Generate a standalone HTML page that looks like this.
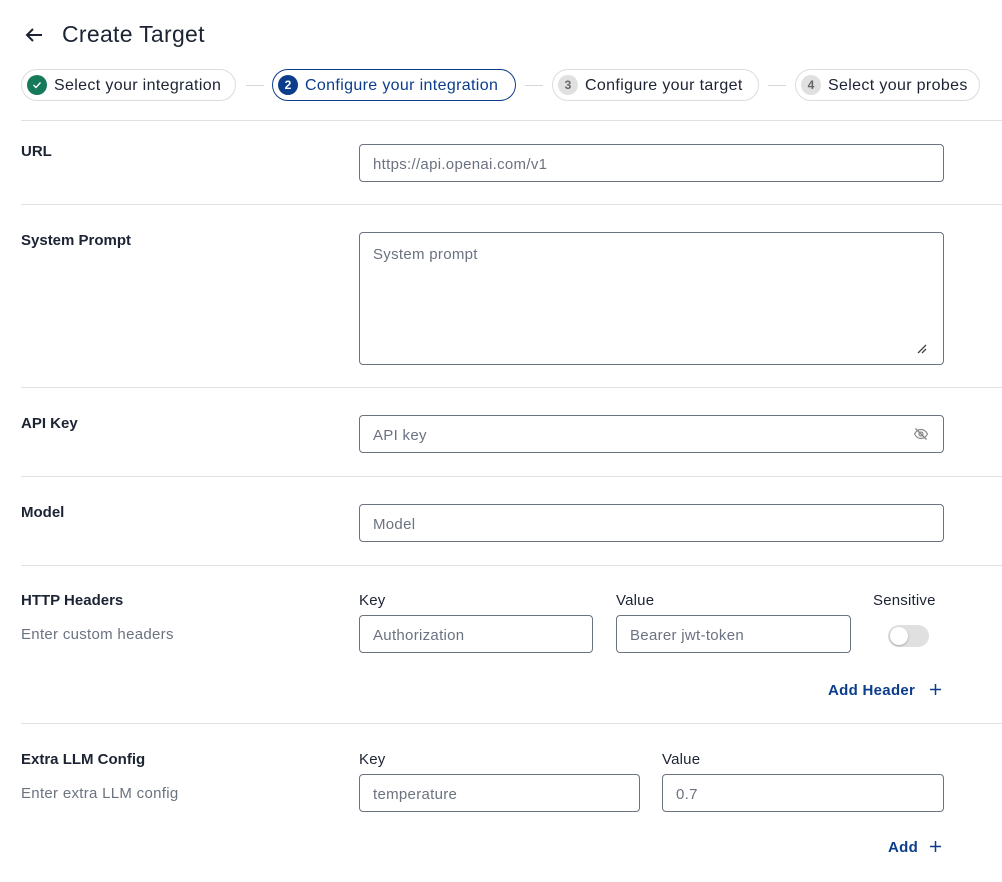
<!DOCTYPE html>
<html><head><meta charset="utf-8"><style>
*{box-sizing:border-box;margin:0;padding:0}
body{width:1002px;height:882px;background:#fff;font-family:"Liberation Sans",sans-serif;color:#1c2333;position:relative;overflow:hidden}
.a{position:absolute}
.t{font-size:15px;white-space:nowrap;letter-spacing:0.2px}
.lbl{font-size:15px;font-weight:bold;color:#1c2333;letter-spacing:0px}
.desc{font-size:15px;color:#6b7280;letter-spacing:0.3px}
.in{position:absolute;border:1px solid #6b7280;border-radius:4px;height:38px;padding:0 13px;font-size:15px;color:#6b7280;line-height:39px;white-space:nowrap;letter-spacing:0.3px}
.hr{position:absolute;left:21px;right:0;height:1px;background:#e0e0e0}
.pill{position:absolute;top:69px;height:32px;border:1px solid #dcdcdc;border-radius:16px;font-size:16px;line-height:32px;padding-left:32px;white-space:nowrap;letter-spacing:0.35px}
.c{position:absolute;left:5px;top:5px;width:20px;height:20px;border-radius:50%;font-size:12px;line-height:20px;text-align:center;font-weight:bold;letter-spacing:0}
.con{position:absolute;top:85px;height:1px;background:#d6d6d6;width:18px}
.blue{color:#0b3d8c;font-weight:bold;font-size:15px;letter-spacing:0.3px}
</style></head><body>
<svg class="a" style="left:25px;top:27px" width="18" height="16" viewBox="0 0 18 16"><path d="M17 8H2M8 2L2 8l6 6" stroke="#1c2333" stroke-width="2" fill="none"/></svg>
<div class="a" style="left:62px;top:21px;font-size:23px;color:#1c2333;letter-spacing:0.3px">Create Target</div>

<div class="pill" style="left:21px;width:215px"><span class="c" style="background:#16795a"><svg width="10" height="10" viewBox="0 0 10 10" style="margin-top:5px"><path d="M1.5 5l2.5 2.5 4.5-5" stroke="#fff" stroke-width="1.4" fill="none"/></svg></span>Select your integration</div>
<div class="con" style="left:246px"></div>
<div class="pill" style="left:272px;width:244px;border-color:#0b3d8c;color:#0b3d8c"><span class="c" style="background:#0b3d8c;color:#fff">2</span>Configure your integration</div>
<div class="con" style="left:525px"></div>
<div class="pill" style="left:552px;width:207px"><span class="c" style="background:#e0e0e0;color:#666">3</span>Configure your target</div>
<div class="con" style="left:768px"></div>
<div class="pill" style="left:795px;width:185px"><span class="c" style="background:#e0e0e0;color:#666">4</span>Select your probes</div>

<div class="hr" style="top:120px"></div>
<div class="a lbl" style="left:21px;top:143px">URL</div>
<div class="in" style="left:359px;top:144px;width:585px">https://api.openai.com/v1</div>
<div class="hr" style="top:204px"></div>
<div class="a lbl" style="left:21px;top:232px">System Prompt</div>
<div class="in" style="left:359px;top:232px;width:585px;height:133px;line-height:44px">System prompt</div>
<svg class="a" style="left:916px;top:343px" width="12" height="12"><path d="M2 10L10 2M6 10l4-4" stroke="#444" stroke-width="1.3"/></svg>
<div class="hr" style="top:387px"></div>
<div class="a lbl" style="left:21px;top:415px">API Key</div>
<div class="in" style="left:359px;top:415px;width:585px">API key</div>
<svg class="a" style="left:913px;top:427px" width="16" height="14" viewBox="0 0 16 14"><path d="M1.5 7c2-3.5 4-4.5 6.5-4.5S12.5 3.5 14.5 7c-2 3.5-4 4.5-6.5 4.5S3.5 10.5 1.5 7z" stroke="#888" stroke-width="1.2" fill="none"/><circle cx="8" cy="7" r="2" stroke="#888" stroke-width="1.2" fill="none"/><path d="M2.5 1.5l11 11" stroke="#888" stroke-width="1.3"/></svg>
<div class="hr" style="top:476px"></div>
<div class="a lbl" style="left:21px;top:504px">Model</div>
<div class="in" style="left:359px;top:504px;width:585px">Model</div>
<div class="hr" style="top:565px"></div>
<div class="a lbl" style="left:21px;top:592px">HTTP Headers</div>
<div class="a desc" style="left:21px;top:626px">Enter custom headers</div>
<div class="a t" style="left:359px;top:592px">Key</div>
<div class="a t" style="left:616px;top:592px">Value</div>
<div class="a t" style="left:873px;top:592px">Sensitive</div>
<div class="in" style="left:359px;top:615px;width:234px">Authorization</div>
<div class="in" style="left:616px;top:615px;width:235px">Bearer jwt-token</div>
<div class="a" style="left:888px;top:625px;width:41px;height:22px;border-radius:11px;background:#e0e0e0"><div class="a" style="left:2px;top:2px;width:18px;height:18px;border-radius:50%;background:#fff;box-shadow:0 1px 2px rgba(0,0,0,.25)"></div></div>
<div class="a blue" style="left:828px;top:682px">Add Header</div>
<svg class="a" style="left:929px;top:683px" width="13" height="13"><path d="M6.5 1v11M1 6.5h11" stroke="#0b3d8c" stroke-width="1.5"/></svg>
<div class="hr" style="top:723px"></div>
<div class="a lbl" style="left:21px;top:751px">Extra LLM Config</div>
<div class="a desc" style="left:21px;top:785px">Enter extra LLM config</div>
<div class="a t" style="left:359px;top:751px">Key</div>
<div class="a t" style="left:662px;top:751px">Value</div>
<div class="in" style="left:359px;top:774px;width:281px">temperature</div>
<div class="in" style="left:662px;top:774px;width:282px">0.7</div>
<div class="a blue" style="left:888px;top:839px">Add</div>
<svg class="a" style="left:929px;top:840px" width="13" height="13"><path d="M6.5 1v11M1 6.5h11" stroke="#0b3d8c" stroke-width="1.5"/></svg>
</body></html>
